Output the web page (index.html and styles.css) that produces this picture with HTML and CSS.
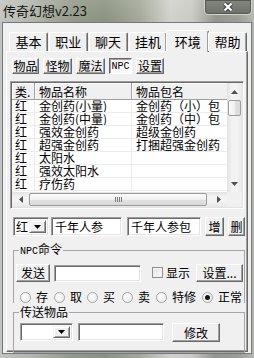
FILE: index.html
```html
<!DOCTYPE html>
<html>
<head>
<meta charset="utf-8">
<link rel="stylesheet" href="styles.css">
</head>
<body>
<div class="titlebar">
  <div class="title">传奇幻想v2.23</div>
  <div class="close">
    <svg width="12" height="10" viewBox="0 0 12 10"><path d="M2.5 1.5l7 7M9.5 1.5l-7 7" stroke="#3c3e3a" stroke-width="4"/><path d="M2.5 1.5l7 7M9.5 1.5l-7 7" stroke="#fff" stroke-width="2.2"/></svg>
  </div>
</div>
<div class="window">
  <div class="tabs">
    <div class="tab">基本</div>
    <div class="tab">职业</div>
    <div class="tab">聊天</div>
    <div class="tab">挂机</div>
    <div class="tab sel">环境</div>
    <div class="tab">帮助</div>
  </div>
  <div class="panel">
    <div class="subbar">
      <div class="btn sb1">物品</div>
      <div class="btn sb2">怪物</div>
      <div class="btn sb2">魔法</div>
      <div class="btn sb3 pressed"><span class="latin">NPC</span></div>
      <div class="btn sb4">设置</div>
    </div>
    <div class="list">
      <div class="lmain">
        <div class="lrow lhead"><div>类.</div><div>物品名称</div><div>物品包名</div></div>
        <div class="lrow"><div>红</div><div>金创药(小量)</div><div>金创药（小）包</div></div>
        <div class="lrow"><div>红</div><div>金创药(中量)</div><div>金创药（中）包</div></div>
        <div class="lrow"><div>红</div><div>强效金创药</div><div>超级金创药</div></div>
        <div class="lrow"><div>红</div><div>超强金创药</div><div>打捆超强金创药</div></div>
        <div class="lrow"><div>红</div><div>太阳水</div><div></div></div>
        <div class="lrow"><div>红</div><div>强效太阳水</div><div></div></div>
        <div class="lrow"><div>红</div><div>疗伤药</div><div></div></div>
      </div>
      <div class="vscroll">
        <div class="varrow"><svg width="7" height="4" viewBox="0 0 7 4"><path d="M0 4h7L3.5 0z" fill="#505050"/></svg></div>
        <div class="vthumb"></div>
        <div class="track"></div>
        <div class="varrow"><svg width="7" height="4" viewBox="0 0 7 4"><path d="M0 0h7L3.5 4z" fill="#505050"/></svg></div>
      </div>
      <div class="hscroll">
        <div class="harrow"><svg width="4" height="7" viewBox="0 0 4 7"><path d="M4 0v7L0 3.5z" fill="#505050"/></svg></div>
        <div class="hthumb"><span class="grip"></span></div>
        <div class="track"></div>
        <div class="harrow"><svg width="4" height="7" viewBox="0 0 4 7"><path d="M0 0v7L4 3.5z" fill="#505050"/></svg></div>
      </div>
      <div class="corner"></div>
    </div>
    <div class="editrow">
      <div class="combo cb-small"><span class="ctext">红</span><div class="dd"><svg width="7" height="4" viewBox="0 0 7 4"><path d="M0 0h7L3.5 4z" fill="#000"/></svg></div></div>
      <div class="field f1">千年人参</div>
      <div class="field f2">千年人参包</div>
      <div class="btn sq1">增</div>
      <div class="btn sq2">删</div>
    </div>
    <fieldset class="group g1">
      <legend><span class="latin">NPC</span>命令</legend>
      <div class="grow1">
        <div class="btn send">发送</div>
        <div class="field f3"></div>
        <div class="check"></div>
        <span class="chklabel">显示</span>
        <div class="btn setbtn">设置...</div>
      </div>
      <div class="radios">
        <div class="radio r1"><span class="rc"></span>存</div>
        <div class="radio r2"><span class="rc"></span>取</div>
        <div class="radio r3"><span class="rc"></span>买</div>
        <div class="radio r4"><span class="rc"></span>卖</div>
        <div class="radio r5"><span class="rc"></span>特修</div>
        <div class="radio"><span class="rc on"></span>正常</div>
      </div>
    </fieldset>
    <fieldset class="group g2">
      <legend>传送物品</legend>
      <div class="grow2">
        <div class="combo cb-wide"><span class="ctext"></span><div class="dd"><svg width="7" height="4" viewBox="0 0 7 4"><path d="M0 0h7L3.5 4z" fill="#000"/></svg></div></div>
        <div class="field f4"></div>
        <div class="btn modify">修改</div>
      </div>
    </fieldset>
  </div>
</div>
</body>
</html>
```

FILE: styles.css
```css
* { box-sizing: border-box; }
html, body { margin: 0; padding: 0; }
body {
  width: 254px;
  height: 358px;
  overflow: hidden;
  font-family: "Noto Sans CJK SC", "Noto Sans", sans-serif;
  font-size: 12px;
  line-height: 1;
  color: #000;
  background:
    linear-gradient(180deg, rgba(255,255,255,0.12), rgba(255,255,255,0) 22px),
    linear-gradient(90deg, #c2c5bf 0px, #b2b6ab 30px, #949a8a 70px, #8a917f 105px, #a3a899 140px, #d0d1ca 170px, #c9cac3 192px, #92958d 215px, #9a9d96 238px, #b4b6b0 254px);
}

.latin { font-family: "Liberation Mono", monospace; font-size: 10px; }

/* title bar */
.titlebar { height: 22px; display: flex; align-items: flex-start; }
.title { margin: 3px 0 0 3px; font-size: 13px; line-height: 15px; color: #141414; }
.close {
  margin: -1px 2px 0 auto;
  width: 48px;
  height: 16px;
  border: 1px solid #d4d6d0;
  border-radius: 0 0 4px 4px;
  background: linear-gradient(180deg, #85877f, #6d7069);
  box-shadow: inset 0 0 0 1px #55584f;
  display: flex;
  align-items: center;
  justify-content: center;
}

/* window */
.window {
  margin: 0 2px;
  height: 332px;
  background: #f0f0f0;
  border: 1px solid #737880;
  padding: 7px 3px 0 3px;
}

/* tabs */
.tabs { display: flex; align-items: flex-end; height: 21px; padding-left: 3px; position: relative; z-index: 1; }
.tab {
  width: 39px;
  margin-right: 1px;
  height: 19px;
  background: #f0f0f0;
  border-top: 1px solid #fff;
  border-left: 1px solid #fff;
  border-right: 1px solid #696969;
  border-radius: 2px 2px 0 0;
  box-shadow: inset -1px 0 #a0a0a0;
  text-align: center;
  font-size: 13px;
  line-height: 16px;
  padding-top: 1px;
}
.tab.sel {
  width: 43px;
  height: 22px;
  margin: 0 -1px -1px -2px;
  padding-top: 3px;
}

/* panel */
.panel {
  height: 301px;
  background: #f0f0f0;
  border: 1px solid;
  border-color: #fff #696969 #696969 #fff;
  box-shadow: inset -1px -1px #a0a0a0;
  padding-top: 6px;
}

.btn {
  background: #f0f0f0;
  border: 1px solid;
  border-color: #fff #696969 #696969 #fff;
  box-shadow: inset -1px -1px #a0a0a0;
  text-align: center;
  white-space: nowrap;
  display: flex;
  align-items: center;
  justify-content: center;
  font-size: 12px;
}
.btn.pressed {
  border-color: #696969 #fff #fff #696969;
  box-shadow: inset 1px 1px #a0a0a0;
  background: #fafafa;
  padding-top: 1px;
}

.subbar { display: flex; gap: 4px; margin-left: 5px; height: 16px; }
.sb1 { width: 27px; }
.sb2 { width: 29px; }
.sb3 { width: 23px; }
.sb4 { width: 28px; }

/* list view */
.list {
  margin: 7px 0 0 3px;
  width: 234px;
  height: 128px;
  border: 1px solid;
  border-color: #a0a0a0 #fff #fff #a0a0a0;
  box-shadow: inset 1px 1px #696969, inset -1px -1px #e3e3e3;
  padding: 1px;
  background: #fff;
  display: grid;
  grid-template-columns: 215px 15px;
  grid-template-rows: 109px 15px;
}
.lmain { overflow: hidden; background: #fff; }
.lrow { display: grid; grid-template-columns: 23px 97px 96px; height: 13px; }
.lrow > div {
  border-right: 1px solid #ececec;
  border-bottom: 1px solid #ececec;
  padding-left: 3px;
  line-height: 12px;
  white-space: nowrap;
  overflow: hidden;
}
.lrow > div + div { padding-left: 4px; }
.lrow.lhead { height: 17px; }
.lrow.lhead > div {
  background: #f0f0f0;
  border-right-color: #a0a0a0;
  border-bottom-color: #a0a0a0;
  box-shadow: inset 1px 1px #fff;
  line-height: 15px;
  padding-top: 1px;
}

.vscroll {
  display: flex;
  flex-direction: column;
  align-items: center;
  background: linear-gradient(90deg, #e3e3e3, #f3f3f3 35%, #f3f3f3 65%, #e8e8e8);
}
.varrow { height: 17px; width: 100%; display: flex; align-items: center; justify-content: center; flex: none; }
.vthumb {
  width: 13px;
  height: 16px;
  flex: none;
  border: 1px solid #9a9a9a;
  border-radius: 2px;
  background: linear-gradient(90deg, #fcfcfc, #f0f0f0 50%, #e2e2e2 51%, #d9d9d9);
}
.track { flex: 1; }
.hscroll {
  display: flex;
  align-items: center;
  background: linear-gradient(180deg, #e3e3e3, #f3f3f3 35%, #f3f3f3 65%, #e8e8e8);
}
.harrow { width: 17px; height: 100%; display: flex; align-items: center; justify-content: center; flex: none; }
.hthumb {
  width: 178px;
  height: 13px;
  flex: none;
  border: 1px solid #9a9a9a;
  border-radius: 2px;
  background: linear-gradient(180deg, #fcfcfc, #f0f0f0 50%, #e2e2e2 51%, #d9d9d9);
  display: flex;
  align-items: center;
  justify-content: center;
}
.grip {
  width: 7px;
  height: 5px;
  background: repeating-linear-gradient(90deg, #7a7a7a 0 1px, transparent 1px 2px);
}
.corner { background: #f0f0f0; }

/* fields */
.field {
  background: #fff;
  border: 1px solid;
  border-color: #a0a0a0 #fff #fff #a0a0a0;
  box-shadow: inset 1px 1px #696969, inset -1px -1px #e3e3e3;
  padding: 2px 3px 0 3px;
  line-height: 13px;
  white-space: nowrap;
  overflow: hidden;
}
.combo {
  background: #fff;
  border: 1px solid;
  border-color: #a0a0a0 #fff #fff #a0a0a0;
  box-shadow: inset 1px 1px #696969, inset -1px -1px #e3e3e3;
  padding: 2px;
  display: flex;
  align-items: stretch;
}
.ctext { flex: 1; line-height: 14px; }
.dd {
  width: 17px;
  background: #f0f0f0;
  border: 1px solid;
  border-color: #f0f0f0 #696969 #696969 #f0f0f0;
  box-shadow: inset 1px 1px #fff, inset -1px -1px #a0a0a0;
  display: flex;
  align-items: center;
  justify-content: center;
}

.editrow { display: flex; margin: 8px 0 0 6px; height: 19px; }
.cb-small { width: 36px; margin-right: 2px; }
.f1 { width: 71px; margin-right: 5px; }
.f2 { width: 74px; margin-right: 4px; }
.sq1 { width: 19px; margin-right: 4px; }
.sq2 { width: 17px; }

/* group boxes */
.group {
  margin: 7px 0 0 6px;
  width: 232px;
  min-width: 0;
  border: 1px solid #a5a5a5;
  padding: 0 0 0 2px;
}
.group legend {
  margin-left: 3px;
  padding: 0 1px;
  font-size: 12px;
  line-height: 12px;
}
.g1 { border-bottom: none; }
.grow1 { display: flex; align-items: flex-start; margin-top: 6px; height: 18px; }
.send { width: 34px; height: 18px; }
.f3 { width: 87px; height: 17px; margin: 1px 0 0 4px; }
.check {
  width: 11px;
  height: 11px;
  margin: 3px 0 0 11px;
  border: 1px solid #8e8f8f;
  background: linear-gradient(135deg, #e2e2e2, #fbfbfb);
  box-shadow: inset 0 0 0 1px #f4f4f4;
}
.chklabel { margin-left: 3px; line-height: 18px; }
.setbtn { width: 47px; height: 18px; margin-left: 6px; }

.radios { display: flex; align-items: center; margin-top: 9px; padding-left: 4px; height: 12px; }
.radio { display: flex; align-items: center; line-height: 12px; flex: none; }
.r1 { width: 34px; }
.r2 { width: 33px; }
.r3 { width: 35px; }
.r4 { width: 34px; }
.r5 { width: 46px; }
.rc {
  width: 11px;
  height: 11px;
  flex: none;
  margin-right: 5px;
  border-radius: 50%;
  border: 1px solid #a4a4a4;
  background: radial-gradient(circle at 40% 40%, #ffffff, #e6e6e6);
  display: flex;
  align-items: center;
  justify-content: center;
}
.rc.on::after {
  content: "";
  width: 5px;
  height: 5px;
  border-radius: 50%;
  background: #141414;
}

.g2 { margin-top: 3px; padding-bottom: 10px; }
.grow2 { display: flex; align-items: flex-start; margin-top: 5px; padding-left: 4px; height: 19px; }
.cb-wide { width: 53px; height: 18px; margin-right: 5px; }
.f4 { width: 86px; height: 18px; margin-right: 8px; }
.modify { width: 48px; height: 19px; }
```
